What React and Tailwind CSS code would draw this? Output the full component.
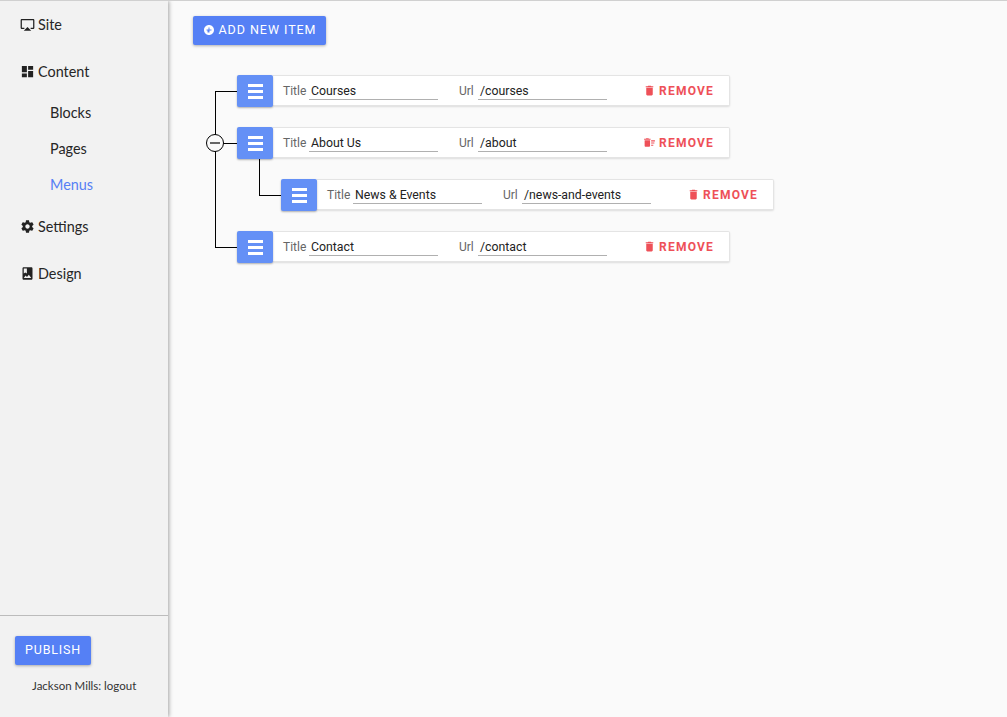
import React from 'react';

const sans = 'font-["Lato",sans-serif]';

// Material icons
const paths = {
  airplay: 'M6 22h12l-6-6zM21 3H3c-1.1 0-2 .9-2 2v12c0 1.1.9 2 2 2h4v-2H3V5h18v12h-4v2h4c1.1 0 2-.9 2-2V5c0-1.1-.9-2-2-2z',
  dashboard: 'M3 13h8V3H3v10zm0 8h8v-6H3v6zm10 0h8V11h-8v10zm0-18v6h8V3h-8z',
  settings: 'M19.43 12.98c.04-.32.07-.64.07-.98s-.03-.66-.07-.98l2.11-1.65c.19-.15.24-.42.12-.64l-2-3.46c-.12-.22-.39-.3-.61-.22l-2.49 1c-.52-.4-1.08-.73-1.69-.98l-.38-2.65C14.46 2.18 14.25 2 14 2h-4c-.25 0-.46.18-.49.42l-.38 2.65c-.61.25-1.17.59-1.69.98l-2.49-1c-.23-.09-.49 0-.61.22l-2 3.46c-.13.22-.07.49.12.64l2.11 1.65c-.04.32-.07.65-.07.98s.03.66.07.98l-2.11 1.65c-.19.15-.24.42-.12.64l2 3.46c.12.22.39.3.61.22l2.49-1c.52.4 1.08.73 1.69.98l.38 2.65c.03.24.24.42.49.42h4c.25 0 .46-.18.49-.42l.38-2.65c.61-.25 1.17-.59 1.69-.98l2.49 1c.23.09.49 0 .61-.22l2-3.46c.12-.22.07-.49-.12-.64l-2.11-1.65zM12 15.5c-1.93 0-3.5-1.57-3.5-3.5s1.57-3.5 3.5-3.5 3.5 1.57 3.5 3.5-1.57 3.5-3.5 3.5z',
  album: 'M18 2H6c-1.1 0-2 .9-2 2v16c0 1.1.9 2 2 2h12c1.1 0 2-.9 2-2V4c0-1.1-.9-2-2-2zM6 4h5v8l-2.5-1.5L6 12V4zm0 15l3-3.86 2.14 2.58 3-3.86L18 19H6z',
  trash: 'M6 19c0 1.1.9 2 2 2h8c1.1 0 2-.9 2-2V7H6v12zM19 4h-3.5l-1-1h-5l-1 1H5v2h14V4z',
  sweep: 'M15 16h4v2h-4zm0-8h7v2h-7zm0 4h6v2h-6zM3 18c0 1.1.9 2 2 2h6c1.1 0 2-.9 2-2V8H3v10zM14 5h-3l-1-1H6L5 5H2v2h12z',
  add: 'M12 2C6.48 2 2 6.48 2 12s4.48 10 10 10 10-4.48 10-10S17.52 2 12 2zm5 11h-4v4h-4v-4H7v-2h4V7h2v4h4v2z',
};

const Icon = ({ name, className }) => (
  <svg className={className} viewBox="0 0 24 24" fill="currentColor">
    <path d={paths[name]} />
  </svg>
);

const NavItem = ({ icon, label }) => (
  <div className="h-[47px] flex items-center pl-[20px] text-[14.4px] text-[#262626]">
    <Icon name={icon} className="w-[15px] h-[15px] mr-[3px] text-[#222]" />
    <span>{label}</span>
  </div>
);

const SubItem = ({ label, active }) => (
  <div className={`h-[36px] flex items-center pb-px pl-[50px] text-[14.4px] ${active ? 'text-[#5580f5]' : 'text-[#262626]'}`}>
    {label}
  </div>
);

const Field = ({ label, value, labelWidth, gap }) => (
  <div className={`flex items-center ${gap}`}>
    <span className={`${labelWidth} text-[12px] text-[#666]`}>{label}</span>
    <div className="w-[129px] h-[19px] border-b border-[#b0b0b0] pl-[2px] pt-px text-[12.3px] leading-[19px] text-[#222]">
      {value}
    </div>
  </div>
);

const MenuRow = ({ title, url, nested, sweep }) => (
  <div className={`flex h-[32px] w-[493px] ${nested ? 'ml-[44px]' : ''}`}>
    <div className="w-[36px] h-[32px] pt-px bg-[#6490f6] rounded-[2px] shadow-[0_1px_2px_rgba(0,0,0,0.3)] flex flex-col items-center justify-center gap-[3px] z-10">
      <div className="w-[15px] h-[3px] bg-white" />
      <div className="w-[15px] h-[3px] bg-white" />
      <div className="w-[15px] h-[3px] bg-white" />
    </div>
    <div className="flex-1 h-[31px] bg-white border border-[#e4e4e4] border-l-0 rounded-r-[2px] shadow-[0_1px_2px_rgba(0,0,0,0.12)] flex items-center pl-[10px]">
      <Field label="Title" value={title} labelWidth="w-[26px]" />
      <Field label="Url" value={url} labelWidth="w-[19px]" gap="ml-[21px]" />
      <div className="ml-auto mr-[15px] flex items-center text-[#ee5058]">
        <Icon name={sweep ? 'sweep' : 'trash'} className="w-[13px] h-[13px] mr-[3px] -mt-px" />
        <span className="text-[12px] font-bold tracking-[1.2px]">REMOVE</span>
      </div>
    </div>
  </div>
);

export default function App() {
  return (
    <div className={`flex h-[717px] w-[1007px] overflow-hidden bg-[#fafafa] border-t border-[#d0d0d0] ${sans}`}>
      {/* Sidebar */}
      <aside className="w-[168px] shrink-0 flex flex-col justify-between bg-[#f2f2f2] shadow-[1px_0_4px_rgba(0,0,0,0.35)] z-20">
        <nav>
          <NavItem icon="airplay" label="Site" />
          <NavItem icon="dashboard" label="Content" />
          <SubItem label="Blocks" />
          <SubItem label="Pages" />
          <SubItem label="Menus" active />
          <NavItem icon="settings" label="Settings" />
          <NavItem icon="album" label="Design" />
        </nav>
        <div className="h-[102px] border-t border-[#bcbcbc] pt-[20px] pl-[15px]">
          <button className="w-[76px] h-[29px] bg-[#5580f5] text-white rounded-[2px] text-[12.5px] font-['Roboto',sans-serif] tracking-[0.8px] shadow-[0_1px_3px_rgba(0,0,0,0.3)]">
            PUBLISH
          </button>
          <div className="mt-[12px] ml-[17px] text-[11.5px] text-[#333]">Jackson Mills: logout</div>
        </div>
      </aside>

      {/* Main */}
      <main className="flex-1 pl-[25px] pt-[15px] font-['Roboto',sans-serif]">
        <button className="w-[133px] h-[29px] bg-[#5580f5] text-white rounded-[2px] flex items-center justify-center text-[12.5px] tracking-[0.95px] shadow-[0_1px_3px_rgba(0,0,0,0.3)]">
          <Icon name="add" className="w-[12px] h-[12px] mr-[4px] -mt-[2px]" />
          <span className="-mt-px">ADD NEW ITEM</span>
        </button>

        <div className="relative mt-[30px] ml-[44px] flex flex-col gap-[20px]">
          {/* tree connectors */}
          <div className="absolute left-[-22px] top-[16px] w-[22px] h-[157px] border-l border-t border-b border-black" />
          <div className="absolute left-[-22px] top-[68px] w-[22px] h-px bg-black" />
          <div className="absolute left-[22px] top-[84px] w-[22px] h-[37px] border-l border-b border-black" />
          <div className="absolute left-[-31px] top-[59px] w-[18px] h-[18px] rounded-full bg-[#fafafa] border border-black flex items-center justify-center z-10">
            <div className="w-[10px] h-[2px] bg-[#666]" />
          </div>

          <MenuRow title="Courses" url="/courses" />
          <MenuRow title="About Us" url="/about" sweep />
          <MenuRow title="News &amp; Events" url="/news-and-events" nested />
          <MenuRow title="Contact" url="/contact" />
        </div>
      </main>
    </div>
  );
}
